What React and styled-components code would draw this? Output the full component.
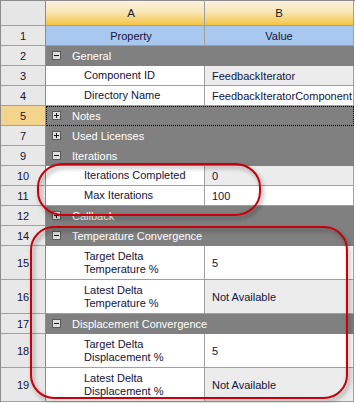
import React from "react";
import styled, { createGlobalStyle } from "styled-components";

const GlobalStyle = createGlobalStyle`
  html, body {
    margin: 0;
    padding: 0;
    background: #ffffff;
  }
  body {
    font-family: "Liberation Sans", Arial, sans-serif;
    font-size: 11px;
  }
`;

const rows = [
  { n: 2, group: "General", open: true },
  { n: 3, prop: "Component ID", value: "FeedbackIterator", ro: true },
  { n: 4, prop: "Directory Name", value: "FeedbackIteratorComponent" },
  { n: 5, group: "Notes", selected: true },
  { n: 7, group: "Used Licenses" },
  { n: 9, group: "Iterations", open: true },
  { n: 10, prop: "Iterations Completed", value: "0", ro: true },
  { n: 11, prop: "Max Iterations", value: "100" },
  { n: 12, group: "Callback" },
  { n: 14, group: "Temperature Convergence", open: true },
  { n: 15, prop: ["Target Delta", "Temperature %"], value: "5" },
  { n: 16, prop: ["Latest Delta", "Temperature %"], value: "Not Available", ro: true },
  { n: 17, group: "Displacement Convergence", open: true },
  { n: 18, prop: ["Target Delta", "Displacement %"], value: "5" },
  { n: 19, prop: ["Latest Delta", "Displacement %"], value: "Not Available", ro: true },
];

export default function App() {
  return (
    <>
      <GlobalStyle />
      <Stage>
        <Sheet>
          <Corner />
          <ColHead $shift={12}>A</ColHead>
          <ColHead>B</ColHead>

          <RowNum>1</RowNum>
          <TitleCell $shift={12}>Property</TitleCell>
          <TitleCell>Value</TitleCell>

          {rows.map((r) => {
            const tall = Array.isArray(r.prop);
            if (r.group) {
              return (
                <React.Fragment key={r.n}>
                  <RowNum $selected={r.selected}>{r.n}</RowNum>
                  <GroupCell $selected={r.selected}>
                    <Toggle open={r.open} />
                    <GroupLabel>{r.group}</GroupLabel>
                  </GroupCell>
                </React.Fragment>
              );
            }
            return (
              <React.Fragment key={r.n}>
                <RowNum $tall={tall}>{r.n}</RowNum>
                <PropCell $tall={tall}>
                  {tall ? (
                    <span>
                      {r.prop[0]}
                      <br />
                      {r.prop[1]}
                    </span>
                  ) : (
                    r.prop
                  )}
                </PropCell>
                <ValueCell $tall={tall} $ro={r.ro}>
                  {r.value}
                </ValueCell>
              </React.Fragment>
            );
          })}
        </Sheet>

        <Callout $left={37} $top={163} $w={224} $h={53} $r="26px / 24px" />
        <Callout $left={30} $top={226} $w={318} $h={173} $r="24px" />
      </Stage>
    </>
  );
}

const Toggle = ({ open }) => (
  <ToggleBox>
    <svg width="9" height="9" viewBox="0 0 9 9">
      <rect x="0.5" y="0.5" width="8" height="8" fill="#dedede" stroke="#5a5a5a" />
      <rect x="2" y="4" width="5" height="1" fill="#1a1a1a" />
      {!open && <rect x="4" y="2" width="1" height="5" fill="#1a1a1a" />}
    </svg>
  </ToggleBox>
);

const Stage = styled.div`
  position: relative;
  width: 356px;
  height: 403px;
  overflow: hidden;
`;

const Sheet = styled.div`
  display: grid;
  grid-template-columns: 45px 159px 149px;
  width: 354px;
  border-left: 1px solid #8c8c8c;
  border-top: 1px solid #8c8c8c;
  color: #14143a;
`;

const Cell = styled.div`
  box-sizing: border-box;
  border-right: 1px solid #a0a0a0;
  border-bottom: 1px solid #a0a0a0;
  height: ${(p) => (p.$tall ? 34 : 20)}px;
  display: flex;
  align-items: center;
  white-space: nowrap;
  overflow: hidden;
`;

const Corner = styled(Cell)`
  height: 25px;
  background: #e6e6e6;
  border-right-color: #8c8c8c;
`;

const ColHead = styled(Cell)`
  height: 25px;
  justify-content: center;
  padding-left: ${(p) => p.$shift || 0}px;
  background: linear-gradient(#fbf2df 0%, #f9e6b8 45%, #f4c443 100%);
  color: #1a1a1a;
  font-size: 11.5px;
`;

const RowNum = styled(Cell)`
  justify-content: center;
  background: ${(p) => (p.$selected ? "#f2d48c" : "#e8e8e8")};
  border-right-color: #8c8c8c;
  color: #141432;
`;

const TitleCell = styled(Cell)`
  justify-content: center;
  padding-left: ${(p) => p.$shift || 0}px;
  background: #a8c8f0;
`;

const GroupCell = styled(Cell)`
  grid-column: span 2;
  background: #808080;
  border-right-color: #808080;
  border-bottom-color: #808080;
  color: #ffffff;
  padding-left: 6px;
  ${(p) =>
    p.$selected &&
    `
    outline: 1px dotted #000000;
    outline-offset: -1px;
  `}
`;

const ToggleBox = styled.span`
  display: flex;
  width: 9px;
  height: 9px;
  margin-right: 11px;
`;

const GroupLabel = styled.span`
  color: #ffffff;
`;

const PropCell = styled(Cell)`
  background: #ffffff;
  padding-left: 38px;
  line-height: 13px;
`;

const ValueCell = styled(Cell)`
  background: ${(p) => (p.$ro ? "#ececec" : "#ffffff")};
  padding-left: 7px;
`;

const Callout = styled.div`
  position: absolute;
  left: ${(p) => p.$left}px;
  top: ${(p) => p.$top}px;
  width: ${(p) => p.$w}px;
  height: ${(p) => p.$h}px;
  box-sizing: border-box;
  border: 2px solid #c8000c;
  border-radius: ${(p) => p.$r};
  filter: drop-shadow(2px 3px 2px rgba(0, 0, 0, 0.4));
  pointer-events: none;
`;
